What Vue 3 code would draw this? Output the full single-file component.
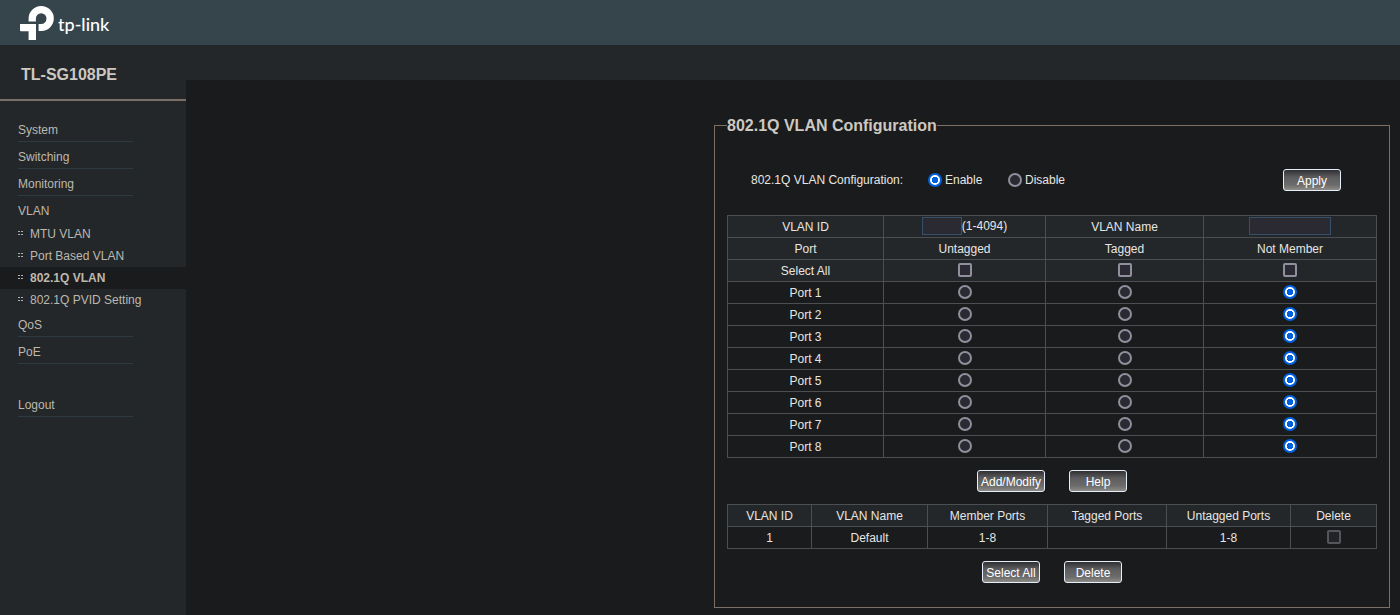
<script setup>
import { ref, reactive } from 'vue'

const menu = [
  { label: 'System' },
  { label: 'Switching' },
  { label: 'Monitoring' },
  {
    label: 'VLAN',
    children: ['MTU VLAN', 'Port Based VLAN', '802.1Q VLAN', '802.1Q PVID Setting'],
  },
  { label: 'QoS' },
  { label: 'PoE' },
  { label: 'Logout', separate: true },
]
const active = ref('802.1Q VLAN')
const mode = ref('enable')
const vlanId = ref('')
const vlanName = ref('')
const memberships = ['Untagged', 'Tagged', 'Not Member']
const ports = reactive(
  Array.from({ length: 8 }, (_, i) => ({ id: i + 1, member: 'Not Member' }))
)
const vlans = [{ id: 1, name: 'Default', member: '1-8', tagged: '', untagged: '1-8' }]

function allAre(kind) {
  return ports.every((p) => p.member === kind)
}
const selectAll = reactive({ Untagged: false, Tagged: false, 'Not Member': false })
function toggleAll(kind) {
  if (!selectAll[kind] || allAre(kind)) return
  ports.forEach((p) => (p.member = kind))
}
</script>

<template>
  <div class="page">
    <header class="topbar">
      <svg class="mark" viewBox="0 0 34 34" aria-hidden="true">
        <path d="M8.600 15.600V12.600A12.600 12.500 0 1 1 21.400 25H18.600V18H21.200A5.300 5.400 0 1 0 15.900 12.600V15.600Z" />
        <path d="M0 18H16V34H8.600V25.200H1Q0 25.200 0 24.200Z" />
      </svg>
      <span class="wordmark">tp-link</span>
    </header>

    <div class="body">
      <aside class="sidebar">
        <h1 class="model">TL-SG108PE</h1>
        <nav>
          <ul class="menu">
            <li v-for="item in menu" :key="item.label" :class="{ separate: item.separate }">
              <a href="#" class="entry" :class="{ open: item.children }" @click.prevent>{{ item.label }}</a>
              <ul v-if="item.children" class="submenu">
                <li v-for="child in item.children" :key="child">
                  <a href="#" class="subentry" :class="{ active: child === active }" @click.prevent="active = child">
                    <svg class="dots" viewBox="0 0 5 4" aria-hidden="true">
                      <path d="M0 0h2v1H0zM3 0h2v1H3zM0 3h2v1H0zM3 3h2v1H3z" />
                    </svg>
                    {{ child }}
                  </a>
                </li>
              </ul>
            </li>
          </ul>
        </nav>
      </aside>

      <main class="content">
        <fieldset class="panel">
          <legend>802.1Q VLAN Configuration</legend>

          <div class="mode" role="radiogroup" aria-labelledby="mode-label">
            <span id="mode-label" class="mode-title">802.1Q VLAN Configuration:</span>
            <label><input v-model="mode" type="radio" name="mode" value="enable">Enable</label>
            <label><input v-model="mode" type="radio" name="mode" value="disable">Disable</label>
            <button type="button" class="apply">Apply</button>
          </div>

          <table class="ports">
            <colgroup><col class="p1"><col class="p2"><col class="p3"><col></colgroup>
            <thead>
              <tr>
                <th><label for="vlan-id">VLAN ID</label></th>
                <td class="control"><div class="field"><input id="vlan-id" v-model="vlanId" class="id-box" type="text">(1-4094)</div></td>
                <th><label for="vlan-name">VLAN Name</label></th>
                <td class="control"><div class="field"><input id="vlan-name" v-model="vlanName" class="name-box" type="text"></div></td>
              </tr>
              <tr>
                <th>Port</th>
                <th v-for="kind in memberships" :key="kind">{{ kind }}</th>
              </tr>
              <tr>
                <th>Select All</th>
                <td v-for="kind in memberships" :key="kind" class="control">
                  <input v-model="selectAll[kind]" type="checkbox" :aria-label="'Select all ' + kind" @change="toggleAll(kind)">
                </td>
              </tr>
            </thead>
            <tbody>
              <tr v-for="port in ports" :key="port.id">
                <th>Port {{ port.id }}</th>
                <td v-for="kind in memberships" :key="kind" class="control">
                  <input v-model="port.member" type="radio" :name="'port' + port.id" :value="kind" :aria-label="'Port ' + port.id + ' ' + kind">
                </td>
              </tr>
            </tbody>
          </table>

          <div class="actions">
            <button type="button" class="wide">Add/Modify</button>
            <button type="button">Help</button>
          </div>

          <table class="vlans">
            <colgroup><col class="v1"><col class="v2"><col class="v3"><col class="v4"><col class="v5"><col></colgroup>
            <thead>
              <tr>
                <th>VLAN ID</th>
                <th>VLAN Name</th>
                <th>Member Ports</th>
                <th>Tagged Ports</th>
                <th>Untagged Ports</th>
                <th>Delete</th>
              </tr>
            </thead>
            <tbody>
              <tr v-for="vlan in vlans" :key="vlan.id">
                <td>{{ vlan.id }}</td>
                <td>{{ vlan.name }}</td>
                <td>{{ vlan.member }}</td>
                <td>{{ vlan.tagged }}</td>
                <td>{{ vlan.untagged }}</td>
                <td class="control"><input type="checkbox" disabled :aria-label="'Delete VLAN ' + vlan.id"></td>
              </tr>
            </tbody>
          </table>

          <div class="actions">
            <button type="button">Select All</button>
            <button type="button">Delete</button>
          </div>
        </fieldset>
      </main>
    </div>
  </div>
</template>

<style>
body {
  margin: 0;
  background: #1a1b1c;
}
</style>

<style scoped>
.page {
  display: flex;
  flex-direction: column;
  min-height: 100vh;
  font: 12px/16px "Liberation Sans", Arial, sans-serif;
  color: #e8e6e3;
}
.topbar {
  display: flex;
  align-items: center;
  gap: 4px;
  height: 45px;
  padding-left: 20px;
  background: #36454c;
}
.mark {
  width: 34px;
  height: 34px;
  fill: #fff;
}
.wordmark {
  padding-top: 2px;
  font: 500 18px/24px Lato, sans-serif;
  color: #fff;
}
.body {
  display: flex;
  flex: 1;
}
.sidebar {
  flex: 0 0 186px;
  background: #232729;
}
.model {
  margin: 0;
  padding: 20px 21px 15px;
  font-size: 16px;
  line-height: 19px;
  color: #cdc8c1;
  border-bottom: 2px solid #7b6f65;
}
.menu,
.submenu {
  margin: 0;
  padding: 0;
  list-style: none;
}
.menu {
  padding-top: 14px;
}
.submenu {
  margin-bottom: -1px;
}
.entry {
  display: block;
  box-sizing: border-box;
  width: 115px;
  height: 27px;
  margin-left: 18px;
  padding-top: 7px;
  border-bottom: 1px solid #2d3a40;
  color: #bdb8af;
  text-decoration: none;
}
.entry.open {
  border-color: transparent;
}
.separate {
  margin-top: 26px;
}
.subentry {
  display: flex;
  align-items: center;
  gap: 7px;
  height: 22px;
  padding-left: 18px;
  color: #bdb8af;
  text-decoration: none;
}
.subentry.active {
  background: #1a1b1c;
  font-weight: bold;
}
.dots {
  width: 5px;
  height: 4px;
  margin-bottom: 2px;
  fill: #a9b4b9;
}
.content {
  flex: 1;
  display: flex;
  flex-direction: column;
  align-items: flex-end;
  padding: 0 10px 7px;
}
.content::before {
  content: "";
  align-self: stretch;
  height: 35px;
  margin: 0 -10px 37px;
  background: #232729;
}
.panel {
  box-sizing: border-box;
  width: 100%;
  max-width: 676px;
  margin: 0;
  padding: 35px 12px 24px;
  border: 1px solid #7b6f65;
}
legend {
  padding: 0;
  font-size: 16px;
  line-height: 17px;
  font-weight: bold;
  color: #cdc8c1;
}
.mode {
  display: flex;
  align-items: center;
  gap: 24px;
  height: 22px;
  padding: 0 36px 0 24px;
  margin-bottom: 24px;
}
.mode-title {
  min-width: 153px;
}
.mode label {
  display: flex;
  align-items: center;
  gap: 3px;
  min-width: 56px;
}
.apply {
  margin-left: auto;
}
table {
  width: 100%;
  table-layout: fixed;
  border-collapse: collapse;
}
th,
td {
  height: 21px;
  padding: 0;
  border: 1px solid #4b4f52;
  text-align: center;
  font-weight: normal;
}
.control {
  height: 20px;
  padding-bottom: 1px;
}
thead {
  background: #232729;
}
.p1 { width: 156px; }
.p2 { width: 162px; }
.p3 { width: 158px; }
.v1 { width: 84px; }
.v2 { width: 116px; }
.v3 { width: 120px; }
.v4 { width: 119px; }
.v5 { width: 124px; }
input {
  appearance: none;
  box-sizing: border-box;
  margin: 0;
}
input[type="radio"],
input[type="checkbox"] {
  display: block;
  width: 14px;
  height: 14px;
  border: 2px solid #8f8f9d;
  border-radius: 2px;
  background: #2b2a33;
}
td > input {
  margin: 0 auto;
}
input[type="radio"] {
  border-radius: 50%;
}
input[type="radio"]:checked {
  border-color: #0060df;
  background: radial-gradient(circle, #0060df 3px, #fff 3px);
}
input[type="checkbox"]:checked {
  border-color: #0060df;
  background: #0060df;
}
input:disabled {
  opacity: 0.5;
}
.field {
  display: flex;
  align-items: center;
  justify-content: center;
}
input[type="text"] {
  height: 18px;
  padding: 0 2px;
  border: 1px solid #35506a;
  background: #2b2a33;
  color: #e8e6e3;
  font: inherit;
}
.id-box { width: 40px; }
.name-box { width: 82px; }
.actions {
  display: flex;
  justify-content: center;
  gap: 24px;
  margin: 12px 0;
}
.actions:last-child {
  margin-bottom: 0;
}
button {
  box-sizing: border-box;
  width: 58px;
  height: 22px;
  padding: 2px 0 0;
  border: 1px solid #e6eefb;
  border-radius: 3px;
  background: linear-gradient(#303032, #5c5c5e 35%, #6c6c6c 75%, #8e8c86);
  color: #fff;
  font: inherit;
  line-height: 16px;
  white-space: nowrap;
}
.wide {
  width: 68px;
}
</style>
